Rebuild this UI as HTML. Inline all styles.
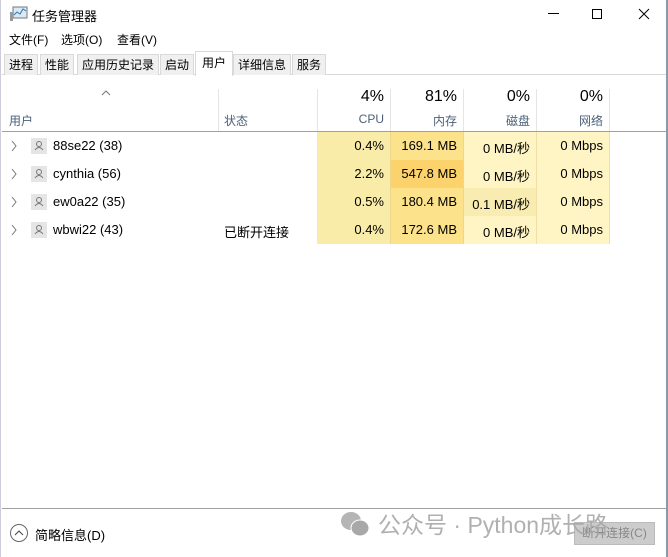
<!DOCTYPE html><html><head><meta charset="utf-8"><style>
body{margin:0;width:668px;height:557px;overflow:hidden;background:#fff;font-family:"Liberation Sans","Noto Sans CJK SC",sans-serif;font-size:13px;color:#000;position:relative}
.a{position:absolute;white-space:nowrap}
.tab{position:absolute;top:54px;height:20px;line-height:20px;background:#f0f0f0;border:1px solid #d9d9d9;border-bottom:none;padding:0 4px;font-size:12px}
.r{position:absolute;text-align:right;font-size:13px;white-space:nowrap}
</style></head><body>
<div class="a" style="left:0;top:0;width:1px;height:557px;background:#ccd"></div>
<div class="a" style="left:666px;top:0;width:2px;height:557px;background:#8a9aa8"></div>
<svg class="a" style="left:10px;top:6px" width="18" height="16"><rect x="3" y="1" width="14" height="11" fill="#dde8f0" stroke="#6a7a8a"/><polyline points="4,9 7,6 10,8 13,3 16,5" fill="none" stroke="#2a7ab8"/><rect x="0" y="6" width="3" height="9" fill="#999"/></svg>
<div class="a" style="left:32px;top:6px;font-size:13px">任务管理器</div>
<svg class="a" style="left:545px;top:8px" width="110" height="12"><line x1="3" y1="5.5" x2="14" y2="5.5" stroke="#000"/><rect x="47.5" y="1.5" width="9" height="9" fill="none" stroke="#000"/><path d="M94 1L104 11M104 1L94 11" stroke="#000"/></svg>
<div class="a" style="left:9px;top:31px;font-size:12px">文件(F)</div>
<div class="a" style="left:61px;top:31px;font-size:12px">选项(O)</div>
<div class="a" style="left:117px;top:31px;font-size:12px">查看(V)</div>
<div class="a" style="left:2px;top:74px;width:664px;height:1px;background:#d9d9d9"></div>
<div class="tab" style="left:4px">进程</div>
<div class="tab" style="left:40px">性能</div>
<div class="tab" style="left:77px">应用历史记录</div>
<div class="tab" style="left:160px">启动</div>
<div class="tab" style="left:195px;top:51px;height:24px;line-height:22px;background:#fff;padding:0 6px">用户</div>
<div class="tab" style="left:233px">详细信息</div>
<div class="tab" style="left:292px">服务</div>
<div class="a" style="left:218px;top:89px;width:1px;height:42px;background:#e5e5e5"></div>
<div class="a" style="left:317px;top:89px;width:1px;height:42px;background:#e5e5e5"></div>
<div class="a" style="left:390px;top:89px;width:1px;height:42px;background:#e5e5e5"></div>
<div class="a" style="left:463px;top:89px;width:1px;height:42px;background:#e5e5e5"></div>
<div class="a" style="left:536px;top:89px;width:1px;height:42px;background:#e5e5e5"></div>
<div class="a" style="left:609px;top:89px;width:1px;height:42px;background:#e5e5e5"></div>
<svg class="a" style="left:101px;top:90px" width="10" height="6"><polyline points="1,5 5,1 9,5" fill="none" stroke="#777"/></svg>
<div class="a" style="left:9px;top:112px;color:#4c607a;font-size:12px">用户</div>
<div class="a" style="left:224px;top:112px;color:#4c607a;font-size:12px">状态</div>
<div class="r" style="left:317px;width:67px;top:88px;font-size:16px">4%</div>
<div class="r" style="left:390px;width:67px;top:88px;font-size:16px">81%</div>
<div class="r" style="left:463px;width:67px;top:88px;font-size:16px">0%</div>
<div class="r" style="left:536px;width:67px;top:88px;font-size:16px">0%</div>
<div class="r" style="left:317px;width:67px;top:112px;color:#4c607a;font-size:12px">CPU</div>
<div class="r" style="left:390px;width:67px;top:112px;color:#4c607a;font-size:12px">内存</div>
<div class="r" style="left:463px;width:67px;top:112px;color:#4c607a;font-size:12px">磁盘</div>
<div class="r" style="left:536px;width:67px;top:112px;color:#4c607a;font-size:12px">网络</div>
<div class="a" style="left:2px;top:131px;width:664px;height:1px;background:#a0a0a0"></div>
<div class="a" style="left:317px;top:132px;width:73px;height:112px;background:#f9eca8"></div>
<div class="a" style="left:390px;top:132px;width:73px;height:112px;background:#fce28b"></div>
<div class="a" style="left:390px;top:160px;width:73px;height:28px;background:#fcd26c"></div>
<div class="a" style="left:463px;top:132px;width:146px;height:112px;background:#fff4c4"></div>
<div class="a" style="left:463px;top:188px;width:73px;height:28px;background:#f9ecb0"></div>
<div class="a" style="left:390px;top:132px;width:1px;height:112px;background:#eed68a"></div>
<div class="a" style="left:463px;top:132px;width:1px;height:112px;background:#eed68a"></div>
<div class="a" style="left:536px;top:132px;width:1px;height:112px;background:#f0e0a8"></div>
<div class="a" style="left:609px;top:132px;width:1px;height:112px;background:#f0e0a8"></div>
<svg class="a" style="left:10px;top:140px" width="10" height="100"><g fill="none" stroke="#777"><polyline points="2,1 6,6 2,11"/><polyline points="2,29 6,34 2,39"/><polyline points="2,57 6,62 2,67"/><polyline points="2,85 6,90 2,95"/></g></svg>
<div class="a" style="left:31px;top:138px;width:16px;height:16px;background:#e5e5e5"></div>
<div class="a" style="left:31px;top:166px;width:16px;height:16px;background:#e5e5e5"></div>
<div class="a" style="left:31px;top:194px;width:16px;height:16px;background:#e5e5e5"></div>
<div class="a" style="left:31px;top:222px;width:16px;height:16px;background:#e5e5e5"></div>
<svg class="a" style="left:31px;top:138px" width="16" height="100"><g fill="none" stroke="#777"><circle cx="8" cy="6" r="2.5"/><path d="M4 12Q8 7 12 12"/><circle cx="8" cy="34" r="2.5"/><path d="M4 40Q8 35 12 40"/><circle cx="8" cy="62" r="2.5"/><path d="M4 68Q8 63 12 68"/><circle cx="8" cy="90" r="2.5"/><path d="M4 96Q8 91 12 96"/></g></svg>
<div class="a" style="left:53px;top:138px">88se22 (38)</div>
<div class="a" style="left:53px;top:166px">cynthia (56)</div>
<div class="a" style="left:53px;top:194px">ew0a22 (35)</div>
<div class="a" style="left:53px;top:222px">wbwi22 (43)</div>
<div class="a" style="left:224px;top:222px">已断开连接</div>
<div class="r" style="left:317px;width:67px;top:138px">0.4%</div>
<div class="r" style="left:317px;width:67px;top:166px">2.2%</div>
<div class="r" style="left:317px;width:67px;top:194px">0.5%</div>
<div class="r" style="left:317px;width:67px;top:222px">0.4%</div>
<div class="r" style="left:390px;width:67px;top:138px">169.1 MB</div>
<div class="r" style="left:390px;width:67px;top:166px">547.8 MB</div>
<div class="r" style="left:390px;width:67px;top:194px">180.4 MB</div>
<div class="r" style="left:390px;width:67px;top:222px">172.6 MB</div>
<div class="r" style="left:463px;width:67px;top:138px">0 MB/秒</div>
<div class="r" style="left:463px;width:67px;top:166px">0 MB/秒</div>
<div class="r" style="left:463px;width:67px;top:194px">0.1 MB/秒</div>
<div class="r" style="left:463px;width:67px;top:222px">0 MB/秒</div>
<div class="r" style="left:536px;width:67px;top:138px">0 Mbps</div>
<div class="r" style="left:536px;width:67px;top:166px">0 Mbps</div>
<div class="r" style="left:536px;width:67px;top:194px">0 Mbps</div>
<div class="r" style="left:536px;width:67px;top:222px">0 Mbps</div>

<div class="a" style="left:2px;top:508px;width:664px;height:1px;background:#a0a0a0"></div>
<svg class="a" style="left:9px;top:523px" width="20" height="20"><circle cx="10" cy="10" r="8.5" fill="none" stroke="#666"/><polyline points="6,12 10,8 14,12" fill="none" stroke="#444"/></svg>
<div class="a" style="left:35px;top:525px">简略信息(D)</div>
<div class="a" style="left:574px;top:522px;width:79px;height:21px;background:#ccc;border:1px solid #bbb;color:#888;text-align:center;line-height:21px;font-size:12px">断开连接(C)</div>
<svg class="a" style="left:340px;top:510px" width="30" height="28"><ellipse cx="11" cy="11" rx="10" ry="9" fill="#b5b5b5"/><ellipse cx="20" cy="18" rx="9" ry="8" fill="#a8a8a8" stroke="#fff"/></svg>
<div class="a" style="left:378px;top:506px;font-size:23px;color:#a8a8a8;opacity:.9">公众号 · Python成长路</div>
</body></html>
